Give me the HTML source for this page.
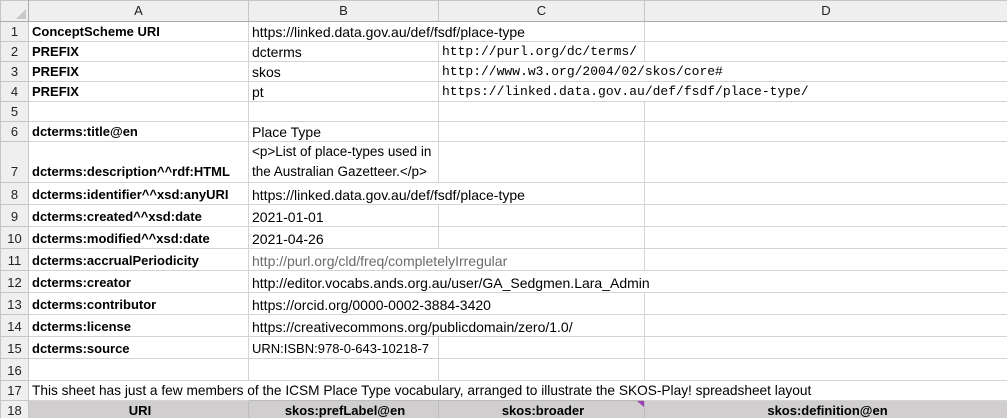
<!DOCTYPE html>
<html><head><meta charset="utf-8"><style>
html,body{margin:0;padding:0;background:#fff;width:1007px;height:418px;overflow:hidden}
table{border-collapse:collapse;table-layout:fixed;width:1007px;font-family:"Liberation Sans",sans-serif;font-size:14px;color:#000}
td{border:1px solid #d4d4d4;padding:0 0 0 3px;white-space:nowrap;overflow:visible;vertical-align:bottom;height:19px;line-height:18px}
td.h{background:#efefef;color:#222;text-align:center;border-color:#c6c6c6;font-size:13px;padding:0}
tr.hd td{height:20px;vertical-align:middle;border-bottom:1px solid #ababab}
td.n{background:#efefef;text-align:center;padding:0;color:#222;border-right:1px solid #ababab;border-color:#c6c6c6;font-size:13px}
td.b{font-weight:bold;font-size:13px}
.m{font-family:"Liberation Mono",monospace;font-size:13px}
tr.r22 td{height:21px}
tr.g td.gg{background:#d0cece;font-weight:bold;text-align:center;border-color:#bdbdbd;font-size:13px}
</style></head><body>
<table>
<colgroup><col style="width:28px"><col style="width:220px"><col style="width:190px"><col style="width:206px"><col style="width:363px"></colgroup>
<tr class="hd"><td class="h" style="border-right:1px solid #ababab"><svg width="10" height="10" style="position:relative;left:6px;top:4px"><path d="M10 0 L10 10 L0 10Z" fill="#c8c8c8"/></svg></td><td class="h">A</td><td class="h">B</td><td class="h">C</td><td class="h">D</td></tr>
<tr><td class="n">1</td><td class="b">ConceptScheme URI</td><td style="border-right:none">https://linked.data.gov.au/def/fsdf/place-type</td><td style="border-left:none"></td><td></td></tr>
<tr><td class="n">2</td><td class="b">PREFIX</td><td>dcterms</td><td class="m">http://purl.org/dc/terms/</td><td></td></tr>
<tr><td class="n">3</td><td class="b">PREFIX</td><td>skos</td><td class="m" style="border-right:none">http://www.w3.org/2004/02/skos/core#</td><td style="border-left:none"></td></tr>
<tr><td class="n">4</td><td class="b">PREFIX</td><td>pt</td><td class="m" style="border-right:none">https://linked.data.gov.au/def/fsdf/place-type/</td><td style="border-left:none"></td></tr>
<tr><td class="n">5</td><td></td><td></td><td></td><td></td></tr>
<tr><td class="n">6</td><td class="b">dcterms:title@en</td><td>Place Type</td><td></td><td></td></tr>
<tr><td class="n" style="height:40px;vertical-align:bottom;line-height:20px">7</td><td class="b" style="line-height:20px">dcterms:description^^rdf:HTML</td><td style="line-height:20px;font-size:13.5px">&lt;p&gt;List of place-types used in<br>the Australian Gazetteer.&lt;/p&gt;</td><td></td><td></td></tr>
<tr class="r22"><td class="n">8</td><td class="b">dcterms:identifier^^xsd:anyURI</td><td style="border-right:none">https://linked.data.gov.au/def/fsdf/place-type</td><td style="border-left:none"></td><td></td></tr>
<tr class="r22"><td class="n">9</td><td class="b">dcterms:created^^xsd:date</td><td>2021-01-01</td><td></td><td></td></tr>
<tr class="r22"><td class="n">10</td><td class="b">dcterms:modified^^xsd:date</td><td>2021-04-26</td><td></td><td></td></tr>
<tr class="r22"><td class="n">11</td><td class="b">dcterms:accrualPeriodicity</td><td style="border-right:none;color:#6b6b6b">http://purl.org/cld/freq/completelyIrregular</td><td style="border-left:none"></td><td></td></tr>
<tr class="r22"><td class="n">12</td><td class="b">dcterms:creator</td><td style="border-right:none">http://editor.vocabs.ands.org.au/user/GA_Sedgmen.Lara_Admin</td><td style="border-left:none;border-right:none"></td><td style="border-left:none"></td></tr>
<tr class="r22"><td class="n">13</td><td class="b">dcterms:contributor</td><td style="border-right:none">https://orcid.org/0000-0002-3884-3420</td><td style="border-left:none"></td><td></td></tr>
<tr class="r22"><td class="n">14</td><td class="b">dcterms:license</td><td style="border-right:none">https://creativecommons.org/publicdomain/zero/1.0/</td><td style="border-left:none"></td><td></td></tr>
<tr class="r22"><td class="n">15</td><td class="b">dcterms:source</td><td style="font-size:13px">URN:ISBN:978-0-643-10218-7</td><td></td><td></td></tr>
<tr class="r22"><td class="n">16</td><td></td><td></td><td></td><td></td></tr>
<tr><td class="n">17</td><td style="border-right:none;font-size:13.7px">This sheet has just a few members of the ICSM Place Type vocabulary, arranged to illustrate the SKOS-Play! spreadsheet layout</td><td style="border:none"></td><td style="border:none"></td><td style="border-left:none"></td></tr>
<tr class="g"><td class="n">18</td><td class="gg">URI</td><td class="gg">skos:prefLabel@en</td><td class="gg" style="position:relative">skos:broader<svg width="7" height="6" style="position:absolute;right:0;top:0"><path d="M0 0H7V6Z" fill="#9b3fb5"/></svg></td><td class="gg">skos:definition@en</td></tr>
</table>
</body></html>
